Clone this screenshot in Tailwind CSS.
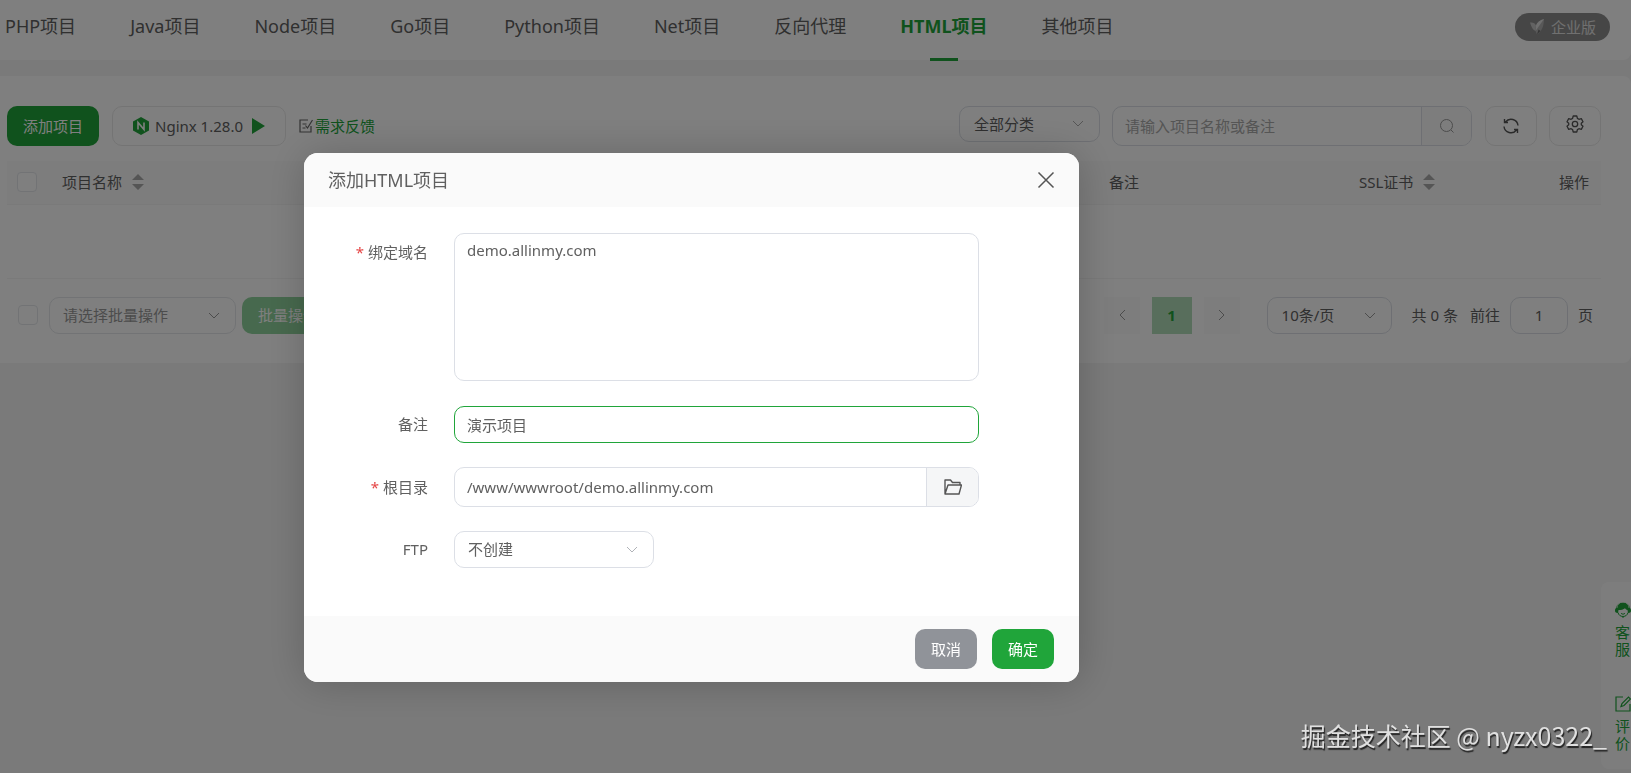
<!DOCTYPE html>
<html lang="zh-CN">
<head>
  <meta charset="UTF-8">
  <title>HTML项目</title>
  <meta name="viewport" content="width=device-width, initial-scale=1">
  <script src="https://cdn.jsdelivr.net/npm/@tailwindcss/browser@4"></script>
</head>
<body class="min-h-screen overflow-x-hidden bg-[#f4f4f4] text-[15px] text-[#606060] font-['Noto_Sans','Noto_Sans_CJK_SC',sans-serif]">

  <!-- Project type tabs -->
  <header class="flex h-[60px] items-center justify-between rounded-br-lg bg-white pr-[21px] pl-[5px]">
    <nav class="flex h-full gap-[54px] text-lg whitespace-nowrap">
      <a href="#" class="pt-3">PHP项目</a>
      <a href="#" class="pt-3">Java项目</a>
      <a href="#" class="pt-3">Node项目</a>
      <a href="#" class="pt-3">Go项目</a>
      <a href="#" class="pt-3">Python项目</a>
      <a href="#" class="pt-3">Net项目</a>
      <a href="#" class="pt-3">反向代理</a>
      <a href="#" class="relative pt-3 font-bold text-[#20a53a]">HTML项目
        <span class="absolute -bottom-px left-1/2 h-[3px] w-7 -translate-x-1/2 bg-[#20a53a]"></span>
      </a>
      <a href="#" class="pt-3">其他项目</a>
    </nav>
    <button class="mb-1.5 flex h-7 w-[95px] items-center justify-center gap-1.5 rounded-full bg-[#8c8c8c] text-[#e0e0e0]">
      <svg class="h-4 w-4" viewBox="0 0 16 16">
        <path d="M1 3.500c3-.5 5 .5 6 3l-.5 5.500C4 11 2.500 8.500 1 3.500z" fill="#c4c4c4"/>
        <path d="M15 0C11 1 8 3.500 7 6.500L6.500 12 8 15.500C12 13 15 8 15 0z" fill="#b0b0b0"/>
        <path d="M15 0C11 1 8 3.500 7 6.500L6.500 12z" fill="#dedede"/>
        <path d="M8 15.500l3.500-3.500-2-1.500z" fill="#6b6b6b"/>
      </svg>
      企业版
    </button>
  </header>

  <main class="mt-4 rounded-r-lg bg-white pt-[30px] pr-[30px] pb-[29px] pl-[7px]">
    <!-- Toolbar -->
    <div class="flex items-start justify-between">
      <div class="flex items-center">
        <button class="h-10 w-[92px] rounded-[10px] bg-[#20a53a] text-white">添加项目</button>
        <button class="ml-[13px] flex h-10 w-[174px] items-center justify-center rounded-[10px] border border-[#e8e8e8]">
          <svg class="mr-1.5 h-[18px] w-4" viewBox="0 0 16 18">
            <path d="M8 0l8 4.5v9L8 18l-8-4.5v-9z" fill="#20a53a"/>
            <path d="M5 12.500V5.500l6 7v-7" fill="none" stroke="#fff" stroke-width="1.600"/>
          </svg>
          Nginx 1.28.0
          <svg class="ml-2 h-4 w-3.5" viewBox="0 0 14 16"><path d="M1 0l13 8L1 16z" fill="#20a53a"/></svg>
        </button>
        <a href="#" class="ml-[13px] flex items-center gap-0.5 text-[#20a53a]">
          <svg class="h-3.5 w-3.5" viewBox="0 0 14 14" fill="none" stroke="#666" stroke-width="1.200">
            <path d="M9 1H1v12h11V7M3.500 5h4M3.500 9h3M6.500 6.500l2 2.500L13.500 1"/>
          </svg>
          需求反馈
        </a>
      </div>
      <div class="flex items-start">
        <div class="relative">
          <select aria-label="分类" class="h-9 w-[141px] appearance-none rounded-[10px] border border-[#dcdfe6] bg-white pl-3.5"><option>全部分类</option></select>
          <svg class="absolute top-3.5 right-4 h-2 w-3" viewBox="0 0 12 8" fill="none" stroke="#aaa"><path d="M1 1l5 5 5-5"/></svg>
        </div>
        <div class="ml-3 flex h-10 w-[360px] overflow-hidden rounded-[10px] border border-[#dcdfe6]">
          <input type="text" aria-label="搜索项目" placeholder="请输入项目名称或备注" class="min-w-0 flex-1 px-3 placeholder-[#aaa]">
          <button aria-label="搜索" class="flex w-[50px] items-center justify-center border-l border-[#dcdfe6] bg-[#fafafa]">
            <svg class="h-4 w-4" viewBox="0 0 16 16" fill="none" stroke="#999"><circle cx="7.500" cy="7.500" r="6"/><path d="M12 12l2.500 2.500"/></svg>
          </button>
        </div>
        <button aria-label="刷新" class="ml-[13px] flex h-10 w-[52px] items-center justify-center rounded-[10px] border border-[#e8e8e8]">
          <svg class="h-[18px] w-[18px]" viewBox="0 0 18 18" fill="none" stroke="#555" stroke-width="1.400">
            <path d="M3.500 5A7 7 0 0116 8.500M2 9.500A7 7 0 0014.500 13M2.500 2v3.500H6M15.500 16v-3.500H12"/>
          </svg>
        </button>
        <button aria-label="设置" class="ml-3 flex h-10 w-[52px] items-center justify-center rounded-[10px] border border-[#e8e8e8] pb-1">
          <svg class="h-[18px] w-[18px]" viewBox="0 0 18 18" fill="none" stroke="#555" stroke-width="1.300" stroke-linejoin="round">
            <path d="M7.200 1h3.600l.6 2.400 1.500.9 2.400-.7 1.700 3.100L15.300 8.200v1.600l1.700 1.500-1.700 3.100-2.400-.7-1.500.9-.6 2.400H7.200l-.6-2.400-1.500-.9-2.400.7L1 11.300l1.700-1.500V8.200L1 6.700l1.700-3.100 2.400.7 1.500-.9z"/>
            <circle cx="9" cy="9" r="2.700"/>
          </svg>
        </button>
      </div>
    </div>

    <!-- Project table -->
    <table class="mt-[15px] w-full table-fixed border-b border-[#f5f5f5]">
      <thead class="bg-[#fafafa] text-left">
        <tr class="h-[43px] border-b border-[#f5f5f5]">
          <th class="w-[45px] pl-2.5"><input type="checkbox" aria-label="全选" class="block h-5 w-5 appearance-none rounded-sm border border-[#e4e6ea] bg-white"></th>
          <th class="px-2.5 font-normal">
            <span class="flex items-center gap-2.5">项目名称
              <svg class="h-4 w-3" viewBox="0 0 12 16" fill="#aaa"><path d="M6 0l6 6H0zM6 16l6-6H0z"/></svg>
            </span>
          </th>
          <th class="w-[250px] px-2.5 font-normal">备注</th>
          <th class="w-[200px] px-2.5 font-normal">
            <span class="flex items-center gap-2.5">SSL证书
              <svg class="h-4 w-3" viewBox="0 0 12 16" fill="#aaa"><path d="M6 0l6 6H0zM6 16l6-6H0z"/></svg>
            </span>
          </th>
          <th class="w-[52px] px-2.5 font-normal whitespace-nowrap">操作</th>
        </tr>
      </thead>
      <tbody>
        <tr class="h-[74px]"><td colspan="5"></td></tr>
      </tbody>
    </table>

    <!-- Batch actions and paging -->
    <div class="mt-[18px] flex items-center justify-between pr-2 pl-[11px]">
      <div class="flex items-center">
        <input type="checkbox" aria-label="选择全部" class="h-5 w-5 appearance-none rounded-sm border border-[#e4e6ea]">
        <div class="relative ml-[11px]">
          <select aria-label="批量操作" class="block h-[37px] w-[187px] appearance-none rounded-[10px] border border-[#e4e6ea] bg-white pl-[13px] text-[#999]"><option>请选择批量操作</option></select>
          <svg class="absolute top-[15px] right-4 h-2 w-3" viewBox="0 0 12 8" fill="none" stroke="#999"><path d="M1 1l5 5 5-5"/></svg>
        </div>
        <button class="ml-1.5 h-[37px] w-[92px] rounded-[10px] bg-[#8fd29c] text-white">批量操作</button>
      </div>
      <div class="flex items-center">
        <button aria-label="上一页" class="flex h-[37px] w-9 items-center justify-center bg-[#fafafa]">
          <svg class="h-3 w-2" viewBox="0 0 8 12" fill="none" stroke="#999"><path d="M7 1L2 6l5 5"/></svg>
        </button>
        <button class="ml-3 h-[37px] w-10 bg-[#b0dcb8] font-bold text-[#20a53a]">1</button>
        <button aria-label="下一页" class="ml-3 flex h-[37px] w-9 items-center justify-center bg-[#fafafa]">
          <svg class="h-3 w-2" viewBox="0 0 8 12" fill="none" stroke="#999"><path d="M1 1l5 5-5 5"/></svg>
        </button>
        <div class="relative ml-[27px]">
          <select aria-label="每页条数" class="block h-[37px] w-[125px] appearance-none rounded-[10px] border border-[#dcdfe6] bg-white pl-3.5"><option>10条/页</option></select>
          <svg class="absolute top-[15px] right-4 h-2 w-3" viewBox="0 0 12 8" fill="none" stroke="#999"><path d="M1 1l5 5 5-5"/></svg>
        </div>
        <span class="ml-5">共 0 条</span>
        <label for="page" class="ml-3">前往</label>
        <input id="page" type="text" value="1" class="mx-2.5 h-[37px] w-[58px] rounded-[10px] border border-[#dcdfe6] text-center">
        <span>页</span>
      </div>
    </div>
  </main>

  <!-- Side service bar -->
  <aside class="fixed top-[582px] right-0 flex h-[187px] w-[30px] flex-col rounded-l-lg bg-[#fbfbfb] pt-5 pl-3.5 leading-[17px] text-[#20a53a]">
    <a href="#" class="block h-[94px]">
      <svg class="mb-1.5 h-4 w-4" viewBox="0 0 16 16">
        <path d="M0 8.500C0 7 .5 6.500 1 6a7.200 7.200 0 0114 0c.5.500 1 1 1 2.500 0 1.500-.5 2-1.500 2.300L13 11l-.5-3C11 7.500 10.500 7 10 6.200 8.500 7.500 6 8 3.500 8L3 11l-1.500-.2C.5 10.500 0 10 0 8.500z" fill="#20a53a"/>
        <path d="M2 6a6 6 0 0112 0" fill="none" stroke="#fbfbfb" stroke-width=".7"/>
        <path d="M3 10.500C3.500 13 5.500 14.500 8 14.500s4.500-1.500 5-4M6 11.200c1 1.300 3 1.300 4 0M7 15h2" fill="none" stroke="#20a53a"/>
      </svg>
      <span class="block w-[15px] break-all">客服</span>
    </a>
    <a href="#" class="block">
      <svg class="mb-1.5 h-4 w-4" viewBox="0 0 16 16" fill="none" stroke="#20a53a" stroke-width="1.200">
        <path d="M8 1H1v14h14V8M6 10.500l1-3L13.500 1l2 2L9 9.500z"/>
      </svg>
      <span class="block w-[15px] break-all">评价</span>
    </a>
  </aside>

  <!-- Add project dialog -->
  <div class="fixed inset-0 flex items-start justify-center bg-black/50 pt-[153px] pr-[248px]">
    <form class="w-[775px] rounded-[14px] bg-white shadow-[1px_1px_40px_rgba(0,0,0,0.2)]">
      <div class="flex h-[54px] items-center justify-between rounded-t-[14px] bg-[#fafafa] px-6">
        <h2 class="text-lg">添加HTML项目</h2>
        <button type="button" aria-label="关闭">
          <svg class="h-[18px] w-[18px]" viewBox="0 0 18 18" fill="none" stroke="#555" stroke-width="1.500"><path d="M1.500 1.500l15 15M16.500 1.500l-15 15"/></svg>
        </button>
      </div>

      <div class="flex flex-col gap-6 pt-[26px] pr-[100px] pb-12">
        <div class="flex gap-[26px]">
          <label for="domain" class="w-[124px] pt-2 text-right"><span class="text-[#e54545]">*</span> 绑定域名</label>
          <textarea id="domain" class="block h-[148px] flex-1 resize-none rounded-[10px] border border-[#dcdfe6] px-3 py-[5px]">demo.allinmy.com</textarea>
        </div>
        <div class="mt-px flex items-center gap-[26px]">
          <label for="remark" class="w-[124px] text-right">备注</label>
          <input id="remark" type="text" value="演示项目" class="h-[37px] flex-1 rounded-[10px] border border-[#20a53a] px-3">
        </div>
        <div class="flex items-center gap-[26px]">
          <label for="root" class="w-[124px] text-right"><span class="text-[#e54545]">*</span> 根目录</label>
          <div class="flex h-10 flex-1 overflow-hidden rounded-[10px] border border-[#dcdfe6]">
            <input id="root" type="text" value="/www/wwwroot/demo.allinmy.com" class="min-w-0 flex-1 px-3">
            <button type="button" aria-label="选择目录" class="flex w-[52px] items-center justify-center border-l border-[#dcdfe6] bg-[#f5f6f7]">
              <svg class="h-4 w-[18px]" viewBox="0 0 18 16" fill="none" stroke="#555" stroke-width="1.400" stroke-linejoin="round">
                <path d="M1 15V1h5.500l2 2.500H16V6M1 15L4 6h13.500L15 15z"/>
              </svg>
            </button>
          </div>
        </div>
        <div class="flex items-center gap-[26px]">
          <label for="ftp" class="w-[124px] text-right">FTP</label>
          <div class="relative">
            <select id="ftp" class="block h-[37px] w-[200px] appearance-none rounded-[10px] border border-[#dcdfe6] bg-white pl-[13px]"><option>不创建</option></select>
            <svg class="absolute top-[15px] right-4 h-2 w-3" viewBox="0 0 12 8" fill="none" stroke="#b0b3b8"><path d="M1 1l5 5 5-5"/></svg>
          </div>
        </div>
      </div>

      <div class="flex h-[66px] items-center justify-end gap-[15px] rounded-b-[14px] bg-[#fafafa] pr-[25px]">
        <button type="button" class="h-10 w-[62px] rounded-[10px] bg-[#909399] text-white">取消</button>
        <button type="submit" class="h-10 w-[62px] rounded-[10px] bg-[#20a53a] text-white">确定</button>
      </div>
    </form>
  </div>

  <!-- Community signature -->
  <p class="fixed right-6 bottom-5 text-[25px] leading-9 whitespace-nowrap text-[#e0e0e0] [text-shadow:1px_2px_1px_#222] font-['Noto_Sans_CJK_SC',sans-serif]">掘金技术社区 @ nyzx0322_</p>
</body>
</html>
